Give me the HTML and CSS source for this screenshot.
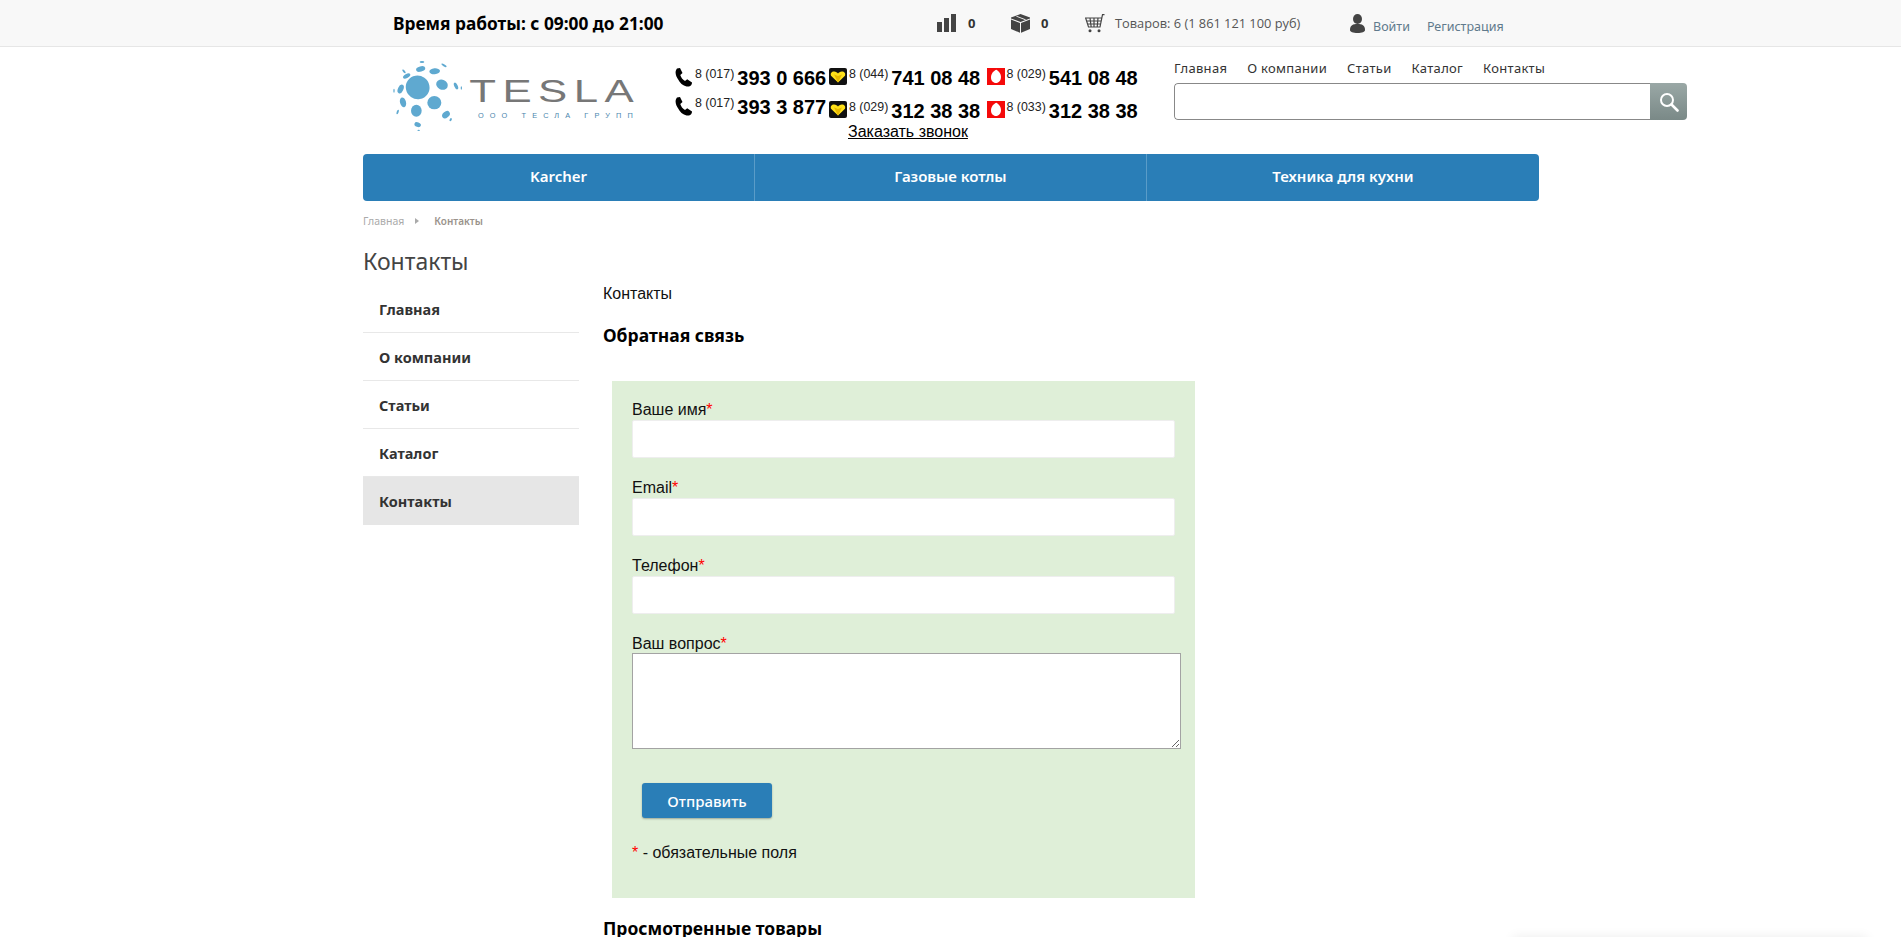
FILE: index.html
```html
<!DOCTYPE html>
<html lang="ru">
<head>
<meta charset="utf-8">
<title>Контакты</title>
<link rel="stylesheet" href="styles.css">
</head>
<body>
<header class="topbar">
  <div class="topbar-in">
    <div class="hours">Время работы: с 09:00 до 21:00</div>
    <div class="counter c-compare">
      <svg class="ic" width="19" height="18" viewBox="0 0 19 18"><path fill="#444" d="M0 8h5v10H0zM7 4h5v14H7zM14 0h5v18h-5z"/></svg>
      <b>0</b>
    </div>
    <div class="counter c-box">
      <svg class="ic" width="19" height="19" viewBox="0 0 19 19"><path fill="#444" d="M9.500 0 19 3.500V15l-9.500 4L0 15V3.500z"/><path fill="#f8f8f8" d="M0 4.500 9.500 8 19 4.500V5.600L10 9v10H9V9L0 5.600zM5 2.400l1-.4 9 3.500-1 .4z"/></svg>
      <b>0</b>
    </div>
    <div class="cart">
      <svg class="ic" width="20" height="19" viewBox="0 0 20 19"><path fill="none" stroke="#444" stroke-width="1.200" d="M19.500 .6h-2l-2.500 12.400H3.500L.6 4h16.200M2 7h14M3 10h12.500M5 4l1.200 9M9 4v9M13 4l-.8 9"/><circle cx="5" cy="16.800" r="1.500" fill="#444"/><circle cx="14" cy="16.800" r="1.500" fill="#444"/></svg>
      <span>Товаров: 6 (1 861 121 100 руб)</span>
    </div>
    <div class="account">
      <svg class="ic" width="15" height="19" viewBox="0 0 15 19"><ellipse cx="7.500" cy="5" rx="4.500" ry="5" fill="#444"/><path fill="#444" d="M0 16c0-5 3-6 7.500-6s7.500 1 7.500 6c0 2-3 3-7.500 3S0 18 0 16z"/></svg>
      <a class="login">Войти</a>
      <a class="register">Регистрация</a>
    </div>
  </div>
</header>

<div class="shell">
  <div class="head">
    <svg class="logo" width="270" height="90" viewBox="0 0 810 270">
      <g fill="#5fa9d0">
        <ellipse cx="113" cy="112" rx="36" ry="35" transform="rotate(35 113 112)"/>
        <ellipse cx="186" cy="104" rx="18" ry="15" transform="rotate(25 186 104)"/>
        <ellipse cx="163" cy="158" rx="21" ry="20"/>
        <ellipse cx="109" cy="182" rx="16" ry="18"/>
        <ellipse cx="69" cy="157" rx="9" ry="15" transform="rotate(-15 69 157)"/>
        <ellipse cx="62" cy="117" rx="8" ry="14" transform="rotate(25 62 117)"/>
        <ellipse cx="80" cy="78" rx="6" ry="12" transform="rotate(60 80 78)"/>
        <ellipse cx="122" cy="57" rx="14" ry="8" transform="rotate(-15 122 57)"/>
        <ellipse cx="164" cy="64" rx="16" ry="9" transform="rotate(-5 164 64)"/>
        <ellipse cx="198" cy="194" rx="9" ry="13" transform="rotate(50 198 194)"/>
        <ellipse cx="113" cy="224" rx="10" ry="7" transform="rotate(20 113 224)"/>
        <ellipse cx="228" cy="108" rx="5" ry="11" transform="rotate(-25 228 108)"/>
        <ellipse cx="53" cy="186" rx="3" ry="7" transform="rotate(20 53 186)"/>
        <ellipse cx="42" cy="122" rx="2" ry="6"/>
        <ellipse cx="72" cy="64" rx="3" ry="7" transform="rotate(-40 72 64)"/>
        <ellipse cx="126" cy="36" rx="7" ry="3"/>
        <ellipse cx="192" cy="46" rx="3" ry="9" transform="rotate(-60 192 46)"/>
        <ellipse cx="212" cy="209" rx="3" ry="5" transform="rotate(30 212 209)"/>
        <ellipse cx="116" cy="241" rx="4" ry="2"/>
        <ellipse cx="244" cy="114" rx="2" ry="5"/>
      </g>
      <text class="logo-name" x="268" y="155" textLength="512" lengthAdjust="spacingAndGlyphs">TESLA</text>
      <text class="logo-sub" x="294" y="205" textLength="464" lengthAdjust="spacing">ООО ТЕСЛА ГРУПП</text>
    </svg>

    <div class="phones">
      <div class="phone-grid">
        <div class="phone-col col-city">
          <div class="phone">
            <svg class="op op-city" width="18" height="19" viewBox="0 0 18 19"><path fill="#000" d="M2 .500 5 0l2.500 5-2.200 2c.8 2.500 2.200 4.500 4.700 6l2.200-1.700 4.800 3.200c.2 1.800-1.200 3.800-3 4-4 .5-8-2-10.500-6.500C.5 8-.5 3.500 2 .500z"/></svg>
            <span class="code">8 (017)</span><span class="num">393 0 666</span>
          </div>
          <div class="phone">
            <svg class="op op-city" width="18" height="19" viewBox="0 0 18 19"><path fill="#000" d="M2 .500 5 0l2.500 5-2.200 2c.8 2.500 2.200 4.500 4.700 6l2.200-1.700 4.800 3.200c.2 1.800-1.200 3.800-3 4-4 .5-8-2-10.500-6.500C.5 8-.5 3.500 2 .500z"/></svg>
            <span class="code">8 (017)</span><span class="num">393 3 877</span>
          </div>
        </div>
        <div class="phone-col col-mob">
          <div class="phone">
            <svg class="op" width="18" height="17" viewBox="0 0 18 17"><rect width="18" height="17" rx="2" fill="#111"/><path fill="#ffe11a" d="M9 14.500 2 7.800C1 5 3 3.300 5.200 3.500 7 3.600 8.200 4.500 9 5.500c.8-1 2-1.900 3.800-2C15 3.300 17 5 16 7.800z"/><path fill="#e8b800" d="M9 14.500V8L5 6.500zM9 8l4-1.500L9 14.500z"/></svg>
            <span class="code">8 (044)</span><span class="num">741 08 48</span>
          </div>
          <div class="phone">
            <svg class="op" width="18" height="17" viewBox="0 0 18 17"><rect width="18" height="17" rx="2" fill="#111"/><path fill="#ffe11a" d="M9 14.500 2 7.800C1 5 3 3.300 5.200 3.500 7 3.600 8.200 4.500 9 5.500c.8-1 2-1.900 3.800-2C15 3.300 17 5 16 7.800z"/><path fill="#e8b800" d="M9 14.500V8L5 6.500zM9 8l4-1.500L9 14.500z"/></svg>
            <span class="code">8 (029)</span><span class="num">312 38 38</span>
          </div>
        </div>
        <div class="phone-col col-mob">
          <div class="phone">
            <svg class="op" width="18" height="17" viewBox="0 0 18 17"><rect width="18" height="17" fill="#f50a0a"/><path fill="#fff" d="M9.500 1.800C11 3 14 5 14 9c0 3.500-2.200 6-5 6s-5-2.300-5-5.500C4 5.500 7 2.500 9.500 1.800z"/></svg>
            <span class="code">8 (029)</span><span class="num">541 08 48</span>
          </div>
          <div class="phone">
            <svg class="op" width="18" height="17" viewBox="0 0 18 17"><rect width="18" height="17" fill="#f50a0a"/><path fill="#fff" d="M9.500 1.800C11 3 14 5 14 9c0 3.500-2.200 6-5 6s-5-2.300-5-5.500C4 5.500 7 2.500 9.500 1.800z"/></svg>
            <span class="code">8 (033)</span><span class="num">312 38 38</span>
          </div>
        </div>
      </div>
      <a class="callback">Заказать звонок</a>
    </div>

    <div class="head-right">
      <nav class="top-links">
        <a>Главная</a><a>О компании</a><a>Статьи</a><a>Каталог</a><a>Контакты</a>
      </nav>
      <div class="search">
        <div class="search-field"></div>
        <div class="search-btn">
          <svg width="20" height="20" viewBox="0 0 20 20"><circle cx="8" cy="8" r="6" fill="none" stroke="#fff" stroke-width="2"/><path d="m12.500 12.500 6 6" stroke="#fff" stroke-width="2.600" stroke-linecap="round"/></svg>
        </div>
      </div>
    </div>
  </div>

  <nav class="main-nav">
    <a>Karcher</a><a>Газовые котлы</a><a>Техника для кухни</a>
  </nav>

  <div class="crumbs">
    <a>Главная</a>
    <svg width="4" height="6" viewBox="0 0 4 6"><path fill="#aaa" d="M0 0l4 3-4 3z"/></svg>
    <b>Контакты</b>
  </div>

  <h1 class="page-title">Контакты</h1>

  <div class="columns">
    <aside class="side">
      <a>Главная</a>
      <a>О компании</a>
      <a>Статьи</a>
      <a>Каталог</a>
      <a class="active">Контакты</a>
    </aside>
    <main class="content">
      <p class="lead">Контакты</p>
      <h2 class="sub">Обратная связь</h2>
      <form class="form-box">
        <label class="lab">Ваше имя<i>*</i></label>
        <input class="inp" type="text">
        <label class="lab">Email<i>*</i></label>
        <input class="inp" type="text">
        <label class="lab">Телефон<i>*</i></label>
        <input class="inp" type="text">
        <label class="lab">Ваш вопрос<i>*</i></label>
        <textarea class="area"></textarea>
        <button class="send" type="button">Отправить</button>
        <p class="req"><i>*</i> - обязательные поля</p>
      </form>
      <h2 class="viewed">Просмотренные товары</h2>
    </main>
  </div>
</div>
<div class="edge-shadow"></div>
</body>
</html>
```
FILE: styles.css
```css
* { box-sizing: border-box; }
html, body { margin: 0; padding: 0; height: 937px; overflow: hidden; background: #fff; }
body { font-family: "Liberation Sans", Arial, sans-serif; color: #000; }
a { color: inherit; text-decoration: none; }

.topbar { height: 47px; background: #f8f8f8; border-bottom: 1px solid #e6e6e6; }
.topbar-in { display: flex; align-items: center; height: 46px; margin-left: 393px; }
.hours { width: 544px; font: 700 17.300px "Noto Sans", sans-serif; color: #000; white-space: nowrap; }
.ic { flex: none; display: block; }
.counter { display: flex; align-items: center; }
.counter b { font: 700 13px "Open Sans", sans-serif; color: #333; }
.c-compare { width: 74px; gap: 12px; }
.c-box { width: 74px; gap: 11px; }
.cart { display: flex; align-items: center; gap: 10px; width: 265px; font: 400 12.800px "Open Sans", sans-serif; color: #555; }
.account { display: flex; align-items: center; font: 400 12.500px "Noto Sans", sans-serif; color: #607a8c; }
.login { margin-left: 8px; padding-top: 6px; }
.register { margin-left: 17px; padding-top: 6px; }

.shell { width: 1324px; margin-left: 363px; }
.head { display: flex; height: 107px; }
.logo { flex: none; margin: 3px 0 0 17px; }
.phones { flex: none; width: 465px; margin-left: 25px; padding-top: 20px; }
.phone-grid { display: flex; gap: 3px; }
.phone-col { display: flex; flex-direction: column; }
.col-city { gap: 10px; }
.col-mob { gap: 14px; }
.phone { display: flex; height: 19px; width: 154.500px; }
.col-city .phone { width: 151px; }
.op { flex: none; margin-top: 1px; }
.code { font-size: 12.400px; line-height: 14px; margin-left: 2px; color: #222; white-space: nowrap; }
.num { font-size: 20px; font-weight: 700; line-height: 23px; margin-left: 3px; white-space: nowrap; }
.callback { display: block; width: 121px; margin: 4px 0 0 173px; font-size: 16px; line-height: 18px; text-decoration: underline; white-space: nowrap; color: #000; }

.head-right { flex: none; width: 513px; margin-left: 34px; }
.top-links { display: flex; gap: 20px; height: 36px; padding-top: 12px; font: 400 13px "Noto Sans", sans-serif; letter-spacing: .3px; color: #333; }
.search { display: flex; height: 37px; border-radius: 4px; overflow: hidden; }
.search-field { flex: 1; background: #fff; border: 1px solid #888; border-right: 0; border-radius: 4px 0 0 4px; }
.search-btn { width: 37px; display: flex; align-items: center; justify-content: center; background: linear-gradient(#9aa8a6, #7a8987); }

.main-nav { display: grid; grid-template-columns: 391px 392px 1fr; width: 1176px; height: 47px; background: #2a7eb7; border-radius: 4px; }
.main-nav a { display: flex; align-items: center; justify-content: center; padding-bottom: 3px; font: 600 15px "Noto Sans", sans-serif; color: #fff; border-left: 1px solid #5a9cc8; }
.main-nav a:first-child { border-left: 0; }

.crumbs { display: flex; align-items: center; height: 14px; margin-top: 13px; font: 400 10.500px "Noto Sans", sans-serif; color: #aaa; }
.crumbs svg { margin: 0 15px 0 11px; }
.crumbs b { font-size: 10px; font-weight: 600; color: #9a938c; }

.page-title { margin: 18px 0 0; font: 400 23px/30px "Noto Sans", sans-serif; color: #444; }

.columns { display: flex; margin-top: 9px; }
.side { flex: none; width: 216px; display: flex; flex-direction: column; }
.side a { display: flex; align-items: center; height: 48px; padding-left: 16px; border-bottom: 1px solid #e8e8e8; font: 700 14.500px "Noto Sans", sans-serif; color: #333; }
.side a.active { background: #e6e6e6; border-bottom: 0; height: 48px; }

.content { flex: none; width: 700px; margin-left: 24px; }
.lead { margin: 0; font-size: 16px; line-height: 18px; color: #111; }
.sub { margin: 19px 0 0; font: 700 17.500px/26px "Noto Sans", sans-serif; color: #000; }
.form-box { display: flex; flex-direction: column; align-items: flex-start; width: 583px; height: 517px; margin: 33px 0 0 9px; padding: 19px 0 0 20px; background: #dfefd8; }
.lab { display: block; font-size: 16px; line-height: 19px; color: #111; }
.lab i, .req i { color: #f00; font-style: normal; }
.inp { display: block; width: 543px; height: 38px; margin: 1px 0 20px; padding: 0; background: #fff; border: 1px solid #eee; border-radius: 2px; }
.area { display: block; width: 549px; height: 96px; margin: 0; padding: 0; background: #fff; border: 1px solid #a3a3a3; border-radius: 0; }
.send { display: block; width: 130px; height: 35px; margin: 34px 0 0 10px; padding: 0; background: #2a7eb7; border: 0; border-radius: 3px; box-shadow: 0 1px 2px rgba(0,0,0,.3); font: 500 15px "Noto Sans", sans-serif; color: #fff; }
.req { margin: 26px 0 0; font-size: 16px; line-height: 18px; color: #111; }
.viewed { margin: 17px 0 0; font: 700 17.500px/26px "Noto Sans", sans-serif; color: #000; white-space: nowrap; }

.logo-name { font: 400 96px "Liberation Sans", sans-serif; letter-spacing: 14px; fill: #777; }
.logo-sub { font: 400 22px "Liberation Sans", sans-serif; fill: #4a86ad; }

.edge-shadow { position: fixed; left: 1513px; top: 937px; width: 354px; height: 20px; box-shadow: 0 0 12px rgba(0,0,0,.08); }
```
